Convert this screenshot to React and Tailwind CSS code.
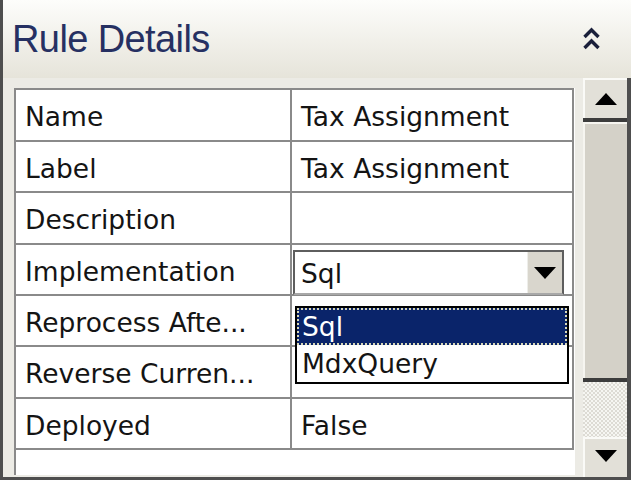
import React from 'react'

const rows = [
	{ label: 'Name', value: 'Tax Assignment', h: 'h-[52px]' },
	{ label: 'Label', value: 'Tax Assignment', h: 'h-[51px]' },
	{ label: 'Description', value: '', h: 'h-[52px]' },
	{ label: 'Implementation', editor: true, h: 'h-[51px]' },
	{ label: 'Reprocess Afte...', value: '', h: 'h-[51px]' },
	{ label: 'Reverse Curren...', value: 'False', h: 'h-[52px]' },
	{ label: 'Deployed', value: 'False', h: 'h-[51px]' },
]

const Triangle = ({ up, className }) => (
	<svg width="22" height="12" viewBox="0 0 22 12" className={className}>
		<polygon points={up ? '0,12 11,0 22,12' : '0,0 22,0 11,12'} fill="#000" />
	</svg>
)

const Chevrons = () => (
	<svg width="17" height="24" viewBox="0 0 17 24">
		<polyline points="1.5,10 8.5,3 15.5,10" fill="none" stroke="#1a1f3a" strokeWidth="3.4" />
		<polyline points="1.5,21 8.5,14 15.5,21" fill="none" stroke="#1a1f3a" strokeWidth="3.4" />
	</svg>
)

export default function App() {
	return (
		<div className="w-[631px] h-[480px] flex flex-col border-l-[3px] border-b-[3px] border-[#4e4e4e] bg-[#ecebe5] font-['DejaVu_Sans',sans-serif] overflow-hidden">
			{/* header */}
			<div className="h-[78px] flex items-start justify-between bg-gradient-to-b from-[#fdfdfb] to-[#e6e4da] pl-[9px] pr-[31px]">
				<div className="mt-[19px] text-[38px] leading-[40px] tracking-[-0.6px] text-[#263062] font-['Liberation_Sans',sans-serif]">Rule Details</div>
				<div className="mt-[27px]"><Chevrons /></div>
			</div>

			{/* body */}
			<div className="h-[399px] flex pl-[11px] border-r-4 border-[#4e4e4e]">
				<div className="relative w-[561px] h-[387px] mt-[10px] bg-white border-l-2 border-[#8a8a8a]">
					<div className="w-[558px] border-t-2 border-r-2 border-[#8a8a8a] text-[26.5px] text-[#141414]">
						{rows.map((r) => (
							<div key={r.label} className={`flex border-b-2 border-[#8a8a8a] ${r.h}`}>
								<div className="w-[276px] border-r-2 border-[#8a8a8a] flex items-center pl-[9px] pt-[4px] whitespace-nowrap">{r.label}</div>
								<div className="flex-1 relative">
									{r.editor ? (
										<div className="mt-[5px] ml-[1px] w-[271px] h-[45px] flex bg-white border-2 border-[#5e5e5e] border-b-[#a8a8a8]">
											<div className="flex-1 flex items-center pl-[6px] pt-[3px]">Sql</div>
											<div className="w-[35px] bg-[#d9d6cd] flex items-center justify-center border-l border-[#eeeeea]">
												<Triangle />
											</div>
										</div>
									) : (
										<div className="h-full flex items-center pl-[9px] pt-[4px] whitespace-nowrap">{r.value}</div>
									)}
								</div>
							</div>
						))}
					</div>

					{/* open dropdown list */}
					<div className="absolute left-[279px] top-[218px] w-[274px] h-[78px] bg-white border-2 border-black text-[26.5px] text-[#141414]">
						<div className="h-[37px] bg-[#0a246a] text-white border-2 border-dotted border-[#d8d8b8] flex items-center pl-[3px]">Sql</div>
						<div className="h-[37px] flex items-center pl-[5px]">MdxQuery</div>
					</div>
				</div>

				{/* scrollbar */}
				<div className="ml-[8px] w-[44px] h-full flex flex-col">
					<div className="h-[44px] flex flex-col">
						<div className="flex-1 bg-[#e2e0d8] border-t-2 border-l-2 border-[#fafaf7] flex items-center justify-center">
							<Triangle up />
						</div>
						<div className="h-[4px] bg-[#3c3c3c]" />
					</div>
					<div className="h-[260px] flex flex-col">
						<div className="flex-1 bg-[#d4d1c8] border-l-2 border-t-2 border-[#f6f5f0]" />
						<div className="h-[4px] bg-[#3c3c3c]" />
					</div>
					<div className="h-[55px] bg-[repeating-conic-gradient(#f6f6f2_0%_25%,#dddbd4_0%_50%)] bg-[length:4px_4px]" />
					<div className="h-[40px] bg-[#e2e0d8] border-t-2 border-l-2 border-[#fafaf7] flex items-center justify-center">
						<Triangle className="mb-[4px]" />
					</div>
				</div>
			</div>
		</div>
	)
}
